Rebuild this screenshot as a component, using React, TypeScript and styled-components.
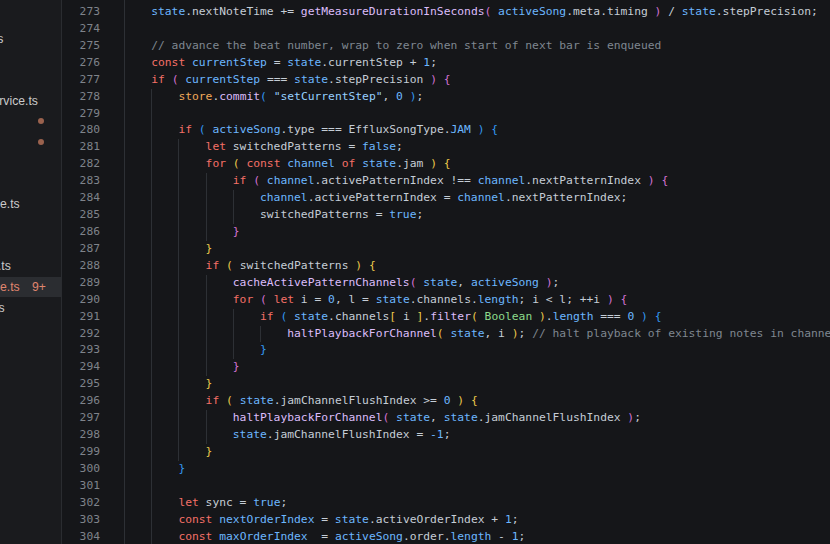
import React from "react";
import styled, { createGlobalStyle } from "styled-components";

const GlobalStyle = createGlobalStyle`
  html, body {
    margin: 0;
    padding: 0;
    background: #151619;
    overflow: hidden;
  }
  #root {
    width: 830px;
    height: 544px;
  }
`;

type Kind = "p" | "k" | "v" | "f" | "s" | "n" | "c" | "t" | "o" | "y" | "m" | "u";

const palette: Record<Kind, string> = {
  p: "inherit",
  k: "#f47067",
  v: "#6cb6ff",
  f: "#dcbdfb",
  s: "#96d0ff",
  n: "#6cb6ff",
  c: "#7f8790",
  t: "#8ddb8c",
  o: "#f0a95a",
  y: "#ecc94b",
  m: "#d473d4",
  u: "#3399f3",
};

/* ---------- layout ---------- */

const Window = styled.div`
  display: flex;
  width: 830px;
  height: 544px;
  overflow: hidden;
  background: #151619;
`;

/* ---------- explorer ---------- */

const Sidebar = styled.aside`
  flex: none;
  width: 61px;
  height: 100%;
  border-right: 1px solid #2a2c30;
  background: #1a1b1e;
  overflow: hidden;
  font-family: "Liberation Sans", Arial, sans-serif;
  font-size: 12.2px;
`;

const Tree = styled.ul`
  list-style: none;
  margin: -12.9px 0 0 -134.7px;
  padding: 0;
  width: 195.7px;
`;

const TreeRow = styled.li<{ $depth: number; $selected?: boolean; $error?: boolean }>`
  display: flex;
  align-items: center;
  height: 20.68px;
  padding-left: ${(p) => p.$depth * 7.5}px;
  padding-right: 15px;
  white-space: nowrap;
  background: ${(p) => (p.$selected ? "#2b2d31" : "transparent")};
  color: ${(p) => (p.$error ? "#e0866f" : "#cacaca")};
`;

const Twistie = styled.span`
  flex: none;
  width: 18px;
  display: flex;
  align-items: center;
  justify-content: center;
  color: #b8b8b8;
`;

const FileName = styled.span`
  flex: none;
`;

const ProblemDot = styled.span`
  flex: none;
  margin-left: auto;
  margin-right: 2px;
  width: 6px;
  height: 6px;
  border-radius: 50%;
  background: #9a624e;
`;

const ProblemBadge = styled.span`
  flex: none;
  margin-left: auto;
`;

/* ---------- editor ---------- */

const Editor = styled.main`
  flex: 1;
  min-width: 0;
  height: 100%;
  overflow: hidden;
  background: #151619;
  font-family: "DejaVu Sans Mono", "Liberation Mono", monospace;
  font-size: 11.3px;
`;

const Viewport = styled.div`
  display: flex;
  margin-top: -12.9px;
`;

const Gutter = styled.div`
  flex: none;
  width: 38px;
  padding-right: 24px;
  text-align: right;
  color: #7f838a;
`;

const LineNumber = styled.div`
  height: 16.93px;
  line-height: 16.93px;
`;

const Code = styled.div`
  flex: 1;
  min-width: 0;
  color: #c5cdd6;
`;

const CodeLine = styled.div`
  display: flex;
  height: 16.93px;
  line-height: 16.93px;
  white-space: pre;
`;

const IndentGuide = styled.span`
  flex: none;
  width: 4ch;
  box-sizing: border-box;
  border-left: 1px solid #2d3035;
`;

const Token = styled.span<{ $kind: Kind }>`
  color: ${(p) => palette[p.$kind]};
`;

/* ---------- data ---------- */

type FileEntry = {
  name: string;
  depth: number;
  folder?: boolean;
  dot?: boolean;
  badge?: string;
  selected?: boolean;
};

const files: FileEntry[] = [
  { name: "worklets", depth: 3, folder: true },
  { name: "audio-factory.ts", depth: 4 },
  { name: "sound-helpers.ts", depth: 4 },
  { name: "index.ts", depth: 4 },
  { name: "index.ts", depth: 3 },
  { name: "midi-keyboard-service.ts", depth: 3 },
  { name: "store", depth: 1, folder: true, dot: true },
  { name: "modules", depth: 2, folder: true, dot: true },
  { name: "editor-module.ts", depth: 3 },
  { name: "history-module.ts", depth: 3 },
  { name: "instrument-module.ts", depth: 3 },
  { name: "midi-module.ts", depth: 3 },
  { name: "plugin-module.ts", depth: 3 },
  { name: "selection-module.ts", depth: 3 },
  { name: "sequencer-module.ts", depth: 3, badge: "9+", selected: true },
  { name: "settings-module.ts", depth: 3 },
  { name: "song-module.ts", depth: 3 },
  { name: "index.ts", depth: 2 },
  { name: "styles", depth: 1, folder: true },
  { name: "utils", depth: 1, folder: true },
  { name: "views", depth: 1, folder: true },
  { name: "App.vue", depth: 1 },
  { name: "main.ts", depth: 1 },
  { name: "tests", depth: 0, folder: true },
  { name: ".gitignore", depth: 0 },
  { name: "package.json", depth: 0 },
  { name: "tsconfig.json", depth: 0 },
];

type Line = { n: number; indent: number; src: string };

const lines: Line[] = [
  { n: 272, indent: 1, src: "«c:// increment the time of the next note, by given amount»" },
  { n: 273, indent: 1, src: "«v:state».nextNoteTime += «f:getMeasureDurationInSeconds»«m:(» «v:activeSong».meta.timing «m:)» / «v:state».stepPrecision;" },
  { n: 274, indent: 1, src: "" },
  { n: 275, indent: 1, src: "«c:// advance the beat number, wrap to zero when start of next bar is enqueued»" },
  { n: 276, indent: 1, src: "«k:const» «v:currentStep» = «v:state».currentStep + «n:1»;" },
  { n: 277, indent: 1, src: "«k:if» «m:(» «v:currentStep» === «v:state».stepPrecision «m:)» «m:{»" },
  { n: 278, indent: 2, src: "«o:store».«f:commit»«u:(» «s:\"setCurrentStep\"», «n:0» «u:)»;" },
  { n: 279, indent: 2, src: "" },
  { n: 280, indent: 2, src: "«k:if» «u:(» «v:activeSong».type === EffluxSongType.«v:JAM» «u:)» «u:{»" },
  { n: 281, indent: 3, src: "«k:let» switchedPatterns = «v:false»;" },
  { n: 282, indent: 3, src: "«k:for» «y:(» «k:const» «v:channel» «k:of» «v:state».jam «y:)» «y:{»" },
  { n: 283, indent: 4, src: "«k:if» «m:(» «v:channel».activePatternIndex !== «v:channel».nextPatternIndex «m:)» «m:{»" },
  { n: 284, indent: 5, src: "«v:channel».activePatternIndex = «v:channel».nextPatternIndex;" },
  { n: 285, indent: 5, src: "switchedPatterns = «v:true»;" },
  { n: 286, indent: 4, src: "«m:}»" },
  { n: 287, indent: 3, src: "«y:}»" },
  { n: 288, indent: 3, src: "«k:if» «y:(» switchedPatterns «y:)» «y:{»" },
  { n: 289, indent: 4, src: "«f:cacheActivePatternChannels»«m:(» «v:state», «v:activeSong» «m:)»;" },
  { n: 290, indent: 4, src: "«k:for» «m:(» «k:let» i = «n:0», l = «v:state».channels.«v:length»; i < l; ++i «m:)» «m:{»" },
  { n: 291, indent: 5, src: "«k:if» «u:(» «v:state».channels«y:[» i «y:]».«f:filter»«y:(» «t:Boolean» «y:)».«v:length» === «n:0» «u:)» «u:{»" },
  { n: 292, indent: 6, src: "«f:haltPlaybackForChannel»«y:(» «v:state», i «y:)»; «c:// halt playback of existing notes in channel»" },
  { n: 293, indent: 5, src: "«u:}»" },
  { n: 294, indent: 4, src: "«m:}»" },
  { n: 295, indent: 3, src: "«y:}»" },
  { n: 296, indent: 3, src: "«k:if» «y:(» «v:state».jamChannelFlushIndex >= «n:0» «y:)» «y:{»" },
  { n: 297, indent: 4, src: "«f:haltPlaybackForChannel»«m:(» «v:state», «v:state».jamChannelFlushIndex «m:)»;" },
  { n: 298, indent: 4, src: "«v:state».jamChannelFlushIndex = «n:-1»;" },
  { n: 299, indent: 3, src: "«y:}»" },
  { n: 300, indent: 2, src: "«u:}»" },
  { n: 301, indent: 2, src: "" },
  { n: 302, indent: 2, src: "«k:let» sync = «v:true»;" },
  { n: 303, indent: 2, src: "«k:const» «v:nextOrderIndex» = «v:state».activeOrderIndex + «n:1»;" },
  { n: 304, indent: 2, src: "«k:const» «v:maxOrderIndex»  = «v:activeSong».order.«v:length» - «n:1»;" },
];

function tokenize(src: string): { kind: Kind; text: string }[] {
  const out: { kind: Kind; text: string }[] = [];
  const re = /«(\w):([^»]*)»/g;
  let last = 0;
  let m: RegExpExecArray | null;
  while ((m = re.exec(src))) {
    if (m.index > last) out.push({ kind: "p", text: src.slice(last, m.index) });
    out.push({ kind: m[1] as Kind, text: m[2] });
    last = m.index + m[0].length;
  }
  if (last < src.length) out.push({ kind: "p", text: src.slice(last) });
  return out;
}

const Chevron = () => (
  <svg width="10" height="10" viewBox="0 0 16 16" fill="none" stroke="currentColor" strokeWidth="1.4">
    <path d="M3.5 6l4.5 4.5L12.5 6" />
  </svg>
);

export default function App() {
  return (
    <>
      <GlobalStyle />
      <Window>
        <Sidebar>
          <Tree>
            {files.map((f, i) => (
              <TreeRow key={i} $depth={f.depth} $selected={f.selected} $error={!!f.badge}>
                <Twistie>{f.folder ? <Chevron /> : null}</Twistie>
                <FileName>{f.name}</FileName>
                {f.dot && <ProblemDot />}
                {f.badge && <ProblemBadge>{f.badge}</ProblemBadge>}
              </TreeRow>
            ))}
          </Tree>
        </Sidebar>
        <Editor>
          <Viewport>
            <Gutter>
              {lines.map((l) => (
                <LineNumber key={l.n}>{l.n}</LineNumber>
              ))}
            </Gutter>
            <Code>
              {lines.map((l) => (
                <CodeLine key={l.n}>
                  {Array.from({ length: l.indent }).map((_, i) => (
                    <IndentGuide key={i} />
                  ))}
                  <span>
                    {tokenize(l.src).map((t, i) => (
                      <Token key={i} $kind={t.kind}>
                        {t.text}
                      </Token>
                    ))}
                  </span>
                </CodeLine>
              ))}
            </Code>
          </Viewport>
        </Editor>
      </Window>
    </>
  );
}
